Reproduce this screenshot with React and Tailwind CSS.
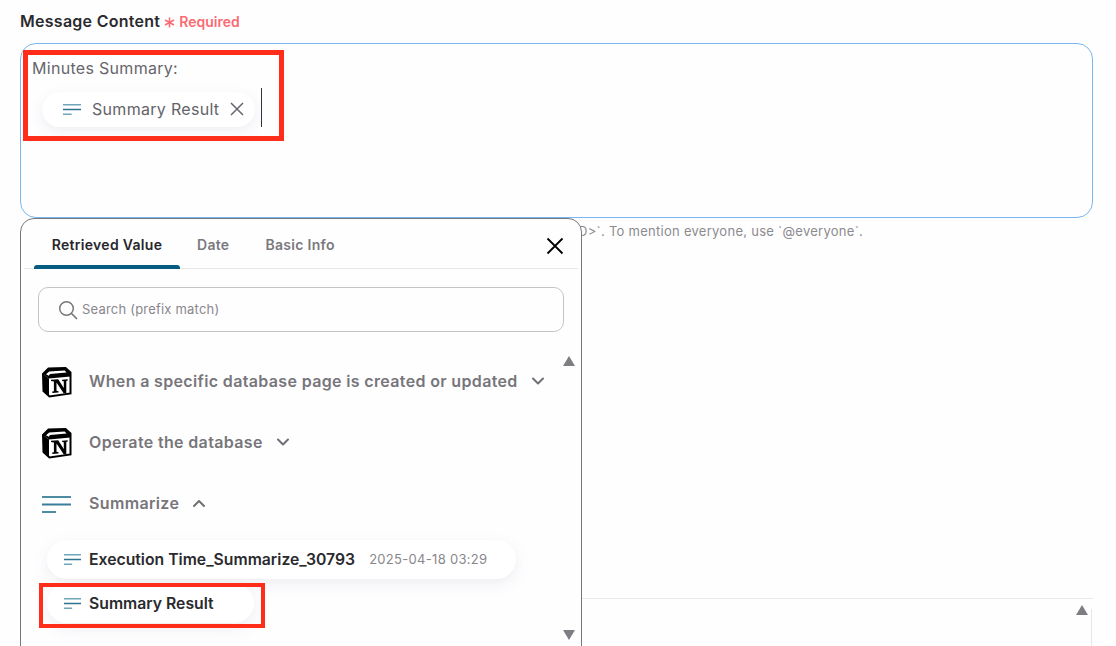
const LinesIcon = ({ w, h, sw = 1.5, top = "#6fa6ba", mid = "#2f7390" }) => (
  <svg width={w} height={h} viewBox={`0 0 ${w} ${h}`} fill="none" className="shrink-0">
    <rect x="0" y="0" width={w} height={sw} fill={top} />
    <rect x="0" y={(h - sw) / 2} width={w} height={sw} fill={mid} />
    <rect x="0" y={h - sw} width={w * 0.48} height={sw} fill={top} />
  </svg>
);

const Chevron = ({ up }) => (
  <svg width="14" height="10" viewBox="0 0 14 10" fill="none" className="shrink-0">
    <path d={up ? "M2 8L7 3L12 8" : "M2 2.5L7 7.5L12 2.5"} stroke="#6f6f75" strokeWidth="2" strokeLinecap="round" strokeLinejoin="round" />
  </svg>
);

const Notion = () => (
  <svg width="30" height="31" viewBox="0 0 30 31" className="shrink-0">
    <path d="M1 7L6.5 1.5L23.5 1L28.5 5.5V26.5L7.5 29.5L1.5 24Z" fill="#fff" stroke="#000" strokeWidth="2" strokeLinejoin="miter" />
    <path d="M1 7L7 11.5L28.5 9.5V5.5L23.5 1L6.5 1.5Z" fill="#000" />
    <path d="M1 7L7 11.5V29.5L1.5 24Z" fill="#000" />
    <path d="M4 7.2L7.2 4.4L22.6 3.6L24.6 5.6L8 6.9L6.8 8.8Z" fill="#fff" />
    <path d="M9 12.8l7.2-.5 5.6 8.6v-6.6l-1.7-.3v-1.3l5.6-.4v1.3l-1.4.4v12l-2.5.4-7.3-10.8v8.2l2 .4v1.3l-6.2.4v-1.3l1.6-.4V14.4l-2.9-.3z" fill="#000" />
  </svg>
);

const Group = ({ icon, title, up, className }) => (
  <div className={`flex items-center ${className}`}>
    <div className="flex w-[30px] shrink-0 justify-start">{icon}</div>
    <span className="ml-[17px] -translate-y-px text-[16px] font-semibold tracking-[0.35px] text-[#77767b]">{title}</span>
    <span className="ml-[13px] flex -translate-y-px"><Chevron up={up} /></span>
  </div>
);

export default function App() {
  return (
    <div className="relative h-[646px] w-[1116px] overflow-hidden bg-[#fffeff] pl-5 pr-[23px] pt-[12px] font-['Inter',sans-serif]">
      <div className="flex h-[18px] items-center">
        <span className="text-[16px] font-semibold tracking-[0.27px] text-[#2b2b2e]">Message Content</span>
        <span className="ml-[4px] mt-[2px] flex h-[12px] w-[11px] items-center justify-center">
          <svg width="11" height="11" viewBox="0 0 11 11" fill="none">
            <path d="M5.5 0.5V10.5M1 3L10 8M10 3L1 8" stroke="#fa6b73" strokeWidth="1.5" />
          </svg>
        </span>
        <span className="ml-[4px] mt-[1px] text-[14px] font-semibold text-[#fa6b73]">Required</span>
      </div>

      <div className="mt-[13px] h-[175px] rounded-2xl border border-[#7ab6f2] pl-[11px] pt-[14px]">
        <div className="text-[16px] leading-[20px] tracking-[0.3px] text-[#66666b]">Minutes Summary:</div>
        <div className="mt-[10px] flex items-center">
          <div className="ml-[10px] mt-[3px] flex h-[35px] w-[213px] items-center rounded-full bg-white pl-[21px] shadow-[0_4px_14px_rgba(60,50,90,0.09)]">
            <LinesIcon w={18} h={11} />
            <span className="ml-[11px] text-[16px] tracking-[0.3px] text-[#636368]">Summary Result</span>
            <svg width="14" height="14" viewBox="0 0 14 14" className="ml-[11px] shrink-0" fill="none">
              <path d="M1 1L13 13M13 1L1 13" stroke="#66666b" strokeWidth="1.5" />
            </svg>
          </div>
          <div className="ml-[6px] h-[39px] w-px bg-[#33333a]" />
        </div>
      </div>

      <p className="mt-[5px] pl-[558px] text-[13px] leading-4 tracking-[0.27px] text-[#8b8b8f]">D&gt;`. To mention everyone, use `@everyone`.</p>

      <div className="absolute left-[581px] right-[23px] top-[598px] h-[60px] border-t border-[#e9e8ea]">
        <div className="absolute right-[1px] top-[10px] h-[60px] w-px bg-[#e6e5e8]" />
        <div className="absolute right-[5px] top-[6px] h-0 w-0 border-x-[6.5px] border-b-[10px] border-x-transparent border-b-[#7e7e82]" />
      </div>

      <div className="absolute left-5 top-[218px] h-[440px] w-[562px] rounded-t-[14px] border border-[#77777b] bg-[#fffeff]">
        <div className="relative mx-[3px] flex h-[50px] border-b border-[#e6e5e8] pl-[10px]">
          <div className="relative flex w-[146px] items-center justify-center pt-[1px] text-[14px] font-semibold tracking-[0.3px] text-[#27272b]">
            Retrieved Value
            <div className="absolute bottom-[-1px] left-0 right-0 h-1 rounded-t-[3px] bg-[#045d80]" />
          </div>
          <div className="ml-[17px] flex items-center pt-[1px] text-[14px] font-semibold tracking-[0.3px] text-[#7a797e]">Date</div>
          <div className="ml-[36px] flex items-center pt-[1px] text-[14px] font-semibold tracking-[0.3px] text-[#7a797e]">Basic Info</div>
          <svg width="18" height="18" viewBox="0 0 18 18" fill="none" className="absolute right-[14px] top-[18px]">
            <path d="M1.5 1.5L16.5 16.5M16.5 1.5L1.5 16.5" stroke="#000" strokeWidth="1.8" />
          </svg>
        </div>

        <div className="mx-[17px] mt-[18px] flex h-[45px] items-center rounded-[10px] border border-[#c4c3c7] pl-[19px]">
          <svg width="20" height="20" viewBox="0 0 20 20" fill="none" className="shrink-0">
            <circle cx="8.5" cy="8.5" r="6.8" stroke="#77777b" strokeWidth="1.5" />
            <path d="M13.5 13.5L18.5 18.5" stroke="#77777b" strokeWidth="1.7" strokeLinecap="round" />
          </svg>
          <span className="ml-[4px] text-[13px] tracking-[0.2px] text-[#88878c]">Search (prefix match)</span>
        </div>

        <div className="relative pl-[21px] pt-[34px]">
          <Group icon={<Notion />} title="When a specific database page is created or updated" className="h-[32px]" />
          <Group icon={<Notion />} title="Operate the database" className="mt-[29px] h-[32px]" />
          <Group icon={<LinesIcon w={29} h={17} sw={2} top="#4d8ba3" mid="#3a7d98" />} title="Summarize" up className="mt-[29px] h-[32px]" />

          <div className="ml-[5px] mt-[20px] flex h-[39px] w-[469px] items-center rounded-full bg-white pl-[17px] shadow-[0_5px_16px_rgba(60,50,90,0.09)]">
            <LinesIcon w={17} h={11} />
            <span className="ml-[8px] text-[15.75px] font-semibold text-[#2a2a2e]">Execution Time_Summarize_30793</span>
            <span className="ml-[14px] text-[13px] tracking-[0.3px] text-[#88878c]">2025-04-18 03:29</span>
          </div>
          <div className="ml-[5px] mt-[5px] flex h-[39px] w-[207px] items-center rounded-full bg-white pl-[17px] shadow-[0_5px_16px_rgba(60,50,90,0.09)]">
            <LinesIcon w={17} h={11} />
            <span className="ml-[8px] text-[15.75px] font-semibold text-[#2a2a2e]">Summary Result</span>
          </div>

          <div className="absolute right-[6px] top-[24px] h-0 w-0 border-x-[6.5px] border-b-[10px] border-x-transparent border-b-[#7e7e82]" />
          <div className="absolute right-[6px] top-[298px] h-0 w-0 border-x-[6.5px] border-t-[10px] border-x-transparent border-t-[#7e7e82]" />
        </div>
      </div>

      <div className="absolute left-[23px] top-[50px] h-[91px] w-[261px] border-[5px] border-[#ff2d1a]" />
      <div className="absolute left-[39px] top-[583px] h-[45px] w-[226px] border-[4px] border-[#ff2d1a]" />
    </div>
  );
}
